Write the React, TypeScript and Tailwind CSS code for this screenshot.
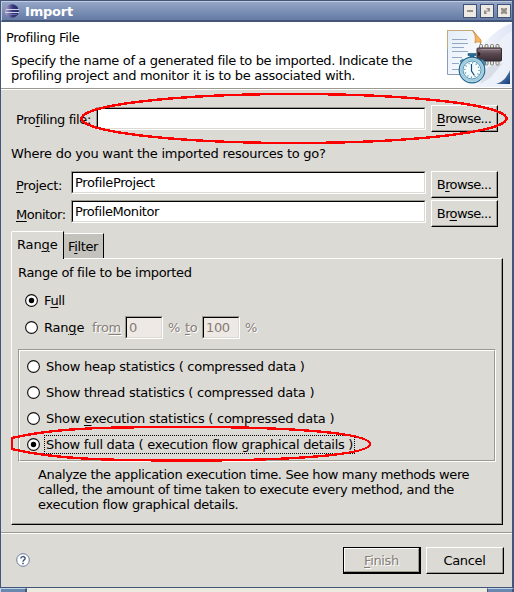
import type { ReactNode } from "react";

const U = ({ children }: { children: ReactNode }) => (
  <span className="underline decoration-1 underline-offset-2">{children}</span>
);

const Bevel = ({ children, className = "" }: { children: ReactNode; className?: string }) => (
  <div className={"flex h-[27px] shrink-0 border-t border-l border-r border-b border-t-white border-l-white border-r-black border-b-black " + className}>
    <div className="flex flex-1 items-center justify-center border-r border-b border-[#9c998f]">{children}</div>
  </div>
);

const Field = ({ value, className = "", disabled = false }: { value?: string; className?: string; disabled?: boolean }) => (
  <div className={"h-[23px] shrink-0 border border-t-[#9c998f] border-l-[#9c998f] border-r-white border-b-white " + className}>
    <div
      className={
        "flex h-full items-center border border-t-black border-l-black border-r-[#dcdad5] border-b-[#dcdad5] pl-[2px] pb-[1px] " +
        (disabled ? "bg-[#eee9e5] text-[#857b74]" : "bg-white")
      }
    >
      {value}
    </div>
  </div>
);

const Radio = ({ on = false }: { on?: boolean }) => (
  <svg width="13" height="13" viewBox="0 0 13 13" className="shrink-0">
    <circle cx="6.5" cy="6.5" r="5.9" fill="#fff" stroke="#111" strokeWidth="1.15" />
    {on && <circle cx="6.5" cy="6.5" r="2.7" fill="#000" />}
  </svg>
);

const WinButton = ({ kind }: { kind: string }) => (
  <svg width="14" height="14" viewBox="0 0 14 14" className="shrink-0">
    <rect x=".5" y=".5" width="13" height="13" fill="#ede9e4" stroke="#3f5274" />
    {kind === "min" && <path d="M4 7h6" stroke="#969188" strokeWidth="2" />}
    {kind === "max" && (
      <g fill="#969188">
        <path d="M6 4h4v4L9 7 8 8 7 7l1-1zM4 6l1 1 1-1 1 1-1 1 1 2H4z" />
      </g>
    )}
    {kind === "close" && <path d="M4 4h2l1 1 1-1h2v2L9 7l1 1v2H8L7 9l-1 1H4V8l1-1-1-1z" fill="#969188" />}
  </svg>
);

const EclipseLogo = () => (
  <svg width="14" height="14" viewBox="0 0 14 14" className="shrink-0">
    <defs>
      <linearGradient id="orb" x1="0" y1="0" x2="1" y2="0">
        <stop offset="0" stopColor="#d3a0b3" />
        <stop offset=".24" stopColor="#7c79ac" />
        <stop offset=".55" stopColor="#39387d" />
        <stop offset="1" stopColor="#252560" />
      </linearGradient>
    </defs>
    <circle cx="7" cy="7" r="6.8" fill="url(#orb)" />
    <path d="M1 5.5h13M0 8.5h14" stroke="#c8d3ee" strokeWidth="1" />
    <path d="M2 10.5h10" stroke="#7a80b4" strokeWidth=".7" />
  </svg>
);

const Banner = () => (
  <svg width="72" height="66" viewBox="0 0 72 66" className="shrink-0">
    <defs>
      <linearGradient id="sky" x1="0" y1="0" x2="1" y2="0">
        <stop offset="0" stopColor="#fff" />
        <stop offset="1" stopColor="#dfe6f6" />
      </linearGradient>
      <linearGradient id="page" x1="0" y1="0" x2="1" y2="1">
        <stop offset="0" stopColor="#e3edf8" />
        <stop offset="1" stopColor="#fff" />
      </linearGradient>
      <linearGradient id="chip" x1="0" y1="0" x2="0" y2="1">
        <stop offset="0" stopColor="#8b7980" />
        <stop offset=".45" stopColor="#594850" />
        <stop offset="1" stopColor="#392d35" />
      </linearGradient>
      <linearGradient id="corner" x1="0" y1="0" x2="1" y2="1">
        <stop offset=".35" stopColor="#a8c2df" />
        <stop offset=".6" stopColor="#3d679e" />
        <stop offset="1" stopColor="#163b75" />
      </linearGradient>
    </defs>
    <path d="M72 1C50 10 34 29 18 65H72z" fill="url(#sky)" />
    <path d="M72 9C52 18 52 47 34 65H72z" fill="#edf1fa" opacity=".75" />
    <path d="M48 45l15-4-13 15-10 6z" fill="#ccd0da" opacity=".6" />
    <path d="M7.500 8.500H33L40.500 20V52.500H7.500z" fill="url(#page)" stroke="#899db8" />
    <path d="M7.500 27V8.500H33" fill="none" stroke="#c9a878" />
    <path d="M12 17.500h15M12 21.500h16M12 25.500h12M12 29.500h16M12 35.500h10M12 41.500h7M12 47.500h7" stroke="#93a7c5" />
    <path d="M32.500 8.500L41 18v3c-3-2-4-1-6 0 1-6 0-9-2.500-12.500z" fill="#f4b461" stroke="#d48830" strokeWidth=".8" />
    <g fill="#e7e4dc" stroke="#77766c" strokeWidth=".9">
      <rect x="39.500" y="22.500" width="3" height="5" rx="1" />
      <rect x="45" y="22.500" width="3" height="5" rx="1" />
      <rect x="50.500" y="22.500" width="3" height="5" rx="1" />
      <rect x="56" y="22.500" width="3" height="5" rx="1" />
      <rect x="39.500" y="38.500" width="3" height="4.500" rx="1" />
      <rect x="45" y="38.500" width="3" height="4.500" rx="1" />
      <rect x="50.500" y="38.500" width="3" height="4.500" rx="1" />
      <rect x="56" y="38.500" width="3" height="4.500" rx="1" />
    </g>
    <rect x="37" y="26" width="24.500" height="13" rx="1" fill="url(#chip)" stroke="#332930" />
    <path d="M38 30c3 0 3 4 0 4" fill="#27202a" />
    <path d="M41 27.500h19" stroke="#ac9da2" strokeWidth=".7" />
    <path d="M28 31.500h8v2h-2v4h-4v-4h-2z" fill="#286b94" stroke="#174d75" strokeWidth=".6" />
    <path d="M20 39l3-2 2 3-3 2zM42 37l4 4-2 3-4-4z" fill="#5592b4" stroke="#245d83" strokeWidth=".6" />
    <circle cx="32" cy="48" r="12.800" fill="#c8e4ef" stroke="#26688f" strokeWidth="1.200" />
    <circle cx="32" cy="48" r="10.800" fill="none" stroke="#9fcbdf" strokeWidth="2" />
    <circle cx="32" cy="48" r="9" fill="#f3fbfc" stroke="#397da0" strokeWidth=".8" />
    <circle cx="32" cy="48" r="7.200" fill="none" stroke="#4c8cac" strokeWidth="1.400" strokeDasharray="1 2.770" />
    <path d="M31.500 42v7l3 4.500" fill="none" stroke="#174f79" strokeWidth="1.200" />
    <path d="M70 48V62H56C63 60 67 55 70 48z" fill="url(#corner)" />
  </svg>
);

const options: { label: ReactNode; on?: boolean }[] = [
  { label: "Show heap statistics ( compressed data )" },
  { label: "Show thread statistics ( compressed data )" },
  { label: <>Show <U>e</U>xecution statistics ( compressed data )</> },
  { label: "Show full data ( execution flow graphical details )", on: true },
];

export default function App() {
  return (
    <div className="relative flex h-[592px] w-[514px] flex-col overflow-hidden bg-[#dcdad5] font-['DejaVu_Sans',sans-serif] text-[13px] leading-[15px] tracking-[-0.36px] whitespace-nowrap text-black">
      <div className="flex h-[588px] flex-col border border-r-2 border-[#43567a]">
        <header className="flex h-[21px] shrink-0 items-center border-t border-l border-b-2 border-t-[#c1cce1] border-l-[#c1cce1] border-b-[#43567a] bg-linear-to-b from-[#94a6c7] to-[#657ba4] pl-[3px]">
          <EclipseLogo />
          <span className="ml-[6px] flex-1 font-bold tracking-[-0.2px] text-white">Import</span>
          <div className="flex gap-[3px] pr-px">
            <WinButton kind="min" />
            <WinButton kind="max" />
            <WinButton kind="close" />
          </div>
        </header>
        <section className="flex h-[66px] shrink-0 justify-between bg-white">
          <div className="pt-2 pl-[5px]">
            <h1>Profiling File</h1>
            <p className="pt-2 pl-[5px]">
              Specify the name of a generated file to be imported. Indicate the
              <br />
              <span className="tracking-[-0.28px]">profiling project and monitor it is to be associated with.</span>
            </p>
          </div>
          <Banner />
        </section>
        <div className="h-[2px] shrink-0 border-t border-b border-t-[#9c998f] border-b-white" />

        <main className="flex h-[441px] shrink-0 flex-col pl-[10px]">
          <div className="flex h-[42px] pt-[15px]">
            <span className="w-[85px] pt-[7px] pl-[5px] tracking-[-0.4px]">Pro<U>f</U>iling file:</span>
            <Field className="mt-[2px] w-[330px]" />
            <Bevel className="ml-[5px] w-[67px] tracking-[-0.6px]"><span><U>B</U>rowse...</span></Bevel>
          </div>
          <div className="h-[39px] pt-[14px] tracking-[-0.26px]">Where do you want the imported resources to go?</div>
          <div className="flex h-[29px]">
            <span className="w-[60px] pt-[7px] pl-[5px]"><U>P</U>roject:</span>
            <Field value="ProfileProject" className="w-[355px]" />
            <Bevel className="ml-[5px] w-[67px] tracking-[-0.6px]"><span>B<U>r</U>owse...</span></Bevel>
          </div>
          <div className="flex h-[31px]">
            <span className="w-[60px] pt-[7px] pl-[5px] tracking-[-0.5px]"><U>M</U>onitor:</span>
            <Field value="ProfileMonitor" className="w-[355px] tracking-[-0.42px]" />
            <Bevel className="ml-[5px] w-[67px] tracking-[-0.6px]"><span>Br<U>o</U>wse...</span></Bevel>
          </div>

          <div className="z-10 flex h-[27px] items-end">
            <div className="-mb-px h-[28px] w-[53px] rounded-tl-[2px] border border-b-0 border-t-white border-l-white border-r-black bg-[#dcdad5] pt-[5px] pl-[5px] tracking-[-0.15px]">
              Ran<U>g</U>e
            </div>
            <div className="h-[25px] w-[40px] border border-b-0 border-t-white border-l-[#c4c2bd] border-r-black bg-[#c4c2bd] pt-[5px] pl-[3px]">
              F<U>i</U>lter
            </div>
          </div>
          <div className="h-[267px] w-[492px] border border-t-white border-l-white border-r-black border-b-black">
            <div className="h-full border-r border-b border-[#9c998f] pl-[6px]">
              <div className="h-[35px] pt-[6px] tracking-[-0.32px]">Range of file to be imported</div>
              <div className="flex h-[13px] items-center gap-[6px] pl-[7px]">
                <Radio on />
                <span>F<U>u</U>ll</span>
              </div>
              <div className="mt-[9px] flex h-[23px] items-center pl-[7px]">
                <Radio />
                <span className="ml-[6px] w-[48px] tracking-[-0.2px]">Ran<U>g</U>e</span>
                <span className="w-[33px] text-[#857f78] [text-shadow:1px_1px_#fff]">fro<U>m</U></span>
                <Field value="0" disabled className="w-[38px]" />
                <span className="ml-[5px] w-[17px] text-[#857f78] [text-shadow:1px_1px_#fff]">%</span>
                <span className="w-[17px] text-[#857f78] [text-shadow:1px_1px_#fff]"><U>t</U>o</span>
                <Field value="100" disabled className="w-[38px]" />
                <span className="ml-[5px] text-[#857f78] [text-shadow:1px_1px_#fff]">%</span>
              </div>
              <div className="mt-[10px] h-[113px] w-[478px] border border-t-[#9c998f] border-l-[#9c998f] border-r-white border-b-white">
                <div className="h-full border border-t-white border-l-white border-r-[#9c998f] border-b-[#9c998f] pt-[2.5px] pl-[7px] tracking-[-0.25px]">
                  {options.map((o, i) => (
                    <div key={i} className="flex h-[26px] items-center">
                      <Radio on={o.on} />
                      <span
                        className={
                          "ml-[4px] flex h-[19px] items-center border border-dotted pl-[1px] whitespace-pre " +
                          (o.on ? "w-[311px] border-black tracking-[-0.28px]" : "border-transparent")
                        }
                      >
                        <span>{o.label}</span>
                      </span>
                    </div>
                  ))}
                </div>
              </div>
              <p className="pt-[5px] pl-[20px]">
                Analyze the application execution time. See how many methods were
                <br />
                called, the amount of time taken to execute every method, and the
                <br />
                <span className="tracking-[-0.3px]">execution flow graphical details.</span>
              </p>
            </div>
          </div>
        </main>

        <div className="mt-px h-[2px] shrink-0 border-t border-b border-t-[#9c998f] border-b-white" />
        <footer className="flex flex-1 items-start pt-[13px] pr-[8px] pl-[15px]">
          <svg width="14" height="14" viewBox="0 0 14 14" className="mt-[6px]">
            <circle cx="7" cy="7" r="6.300" fill="#fff" stroke="#6c7a9d" />
            <path d="M4.900 5.600C4.900 3 9.100 3 9.100 5.400 9.100 7 7 6.700 7 8.700" fill="none" stroke="#44547f" strokeWidth="1.500" />
            <path d="M6.200 9.700h1.600v1.500H6.200z" fill="#44547f" />
          </svg>
          <div className="ml-auto flex h-[27px] w-[78px] border border-r-2 border-b-2 border-black">
            <div className="flex flex-1 items-center justify-center border border-t-white border-l-white border-r-[#9c998f] border-b-[#9c998f] text-[#857f78] [text-shadow:1px_1px_#fff]">
              <span><U>F</U>inish</span>
            </div>
          </div>
          <Bevel className="ml-[5px] w-[78px]">Cancel</Bevel>
        </footer>
      </div>
      <div className="flex h-[4px] justify-between bg-[#ecebe0]">
        <div className="w-[27px] border-t border-r-2 border-l border-t-[#bcd3ea] border-l-[#bcd3ea] border-r-[#43567a] bg-[#6a88b0]" />
        <div className="w-[27px] border-t border-r-2 border-l border-t-[#bcd3ea] border-l-[#43567a] border-r-[#43567a] bg-[#6a88b0]" />
      </div>

      <svg width="514" height="592" className="pointer-events-none absolute inset-0 z-20" fill="none" stroke="#f00" strokeWidth="2.4" shapeRendering="crispEdges">
        <ellipse cx="294" cy="118.500" rx="212.500" ry="24.500" />
        <path d="M12 438C58 427 116 427 192 427C290 427 370 433 370 444C370 455 290 460.500 192 460.500C116 460.500 58 460 12 449Z" />
      </svg>
    </div>
  );
}
